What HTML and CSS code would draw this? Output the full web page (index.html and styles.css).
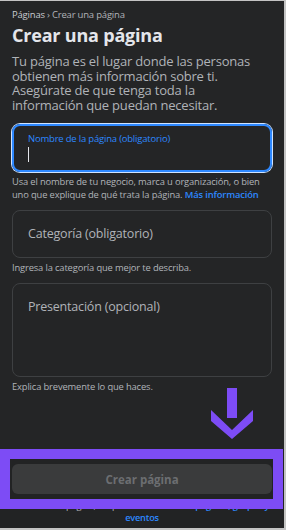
FILE: index.html
```html
<!DOCTYPE html>
<html lang="es">
<head>
    <meta charset="UTF-8">
    <title>Crear una página</title>
    <link rel="stylesheet" href="styles.css">
</head>
<body>
    <div class="screen">
        <div class="content">
            <div class="breadcrumb">
                <span class="crumb-root">Páginas</span> › Crear una página
            </div>
            <h1 class="title">Crear una página</h1>
            <p class="intro">
                Tu página es el lugar donde las personas obtienen más información sobre ti. Asegúrate de que tenga toda la información que puedan necesitar.
            </p>

            <div class="field field-active">
                <span class="field-label">Nombre de la página (obligatorio)</span>
                <span class="caret"></span>
            </div>
            <p class="hint">Usa el nombre de tu negocio, marca u organización, o bien uno que explique de qué trata la página. <a class="link" href="#">Más información</a></p>

            <div class="field">
                <span class="placeholder">Categoría (obligatorio)</span>
            </div>
            <p class="hint">Ingresa la categoría que mejor te describa.</p>

            <div class="field field-area">
                <span class="placeholder">Presentación (opcional)</span>
            </div>
            <p class="hint">Explica brevemente lo que haces.</p>
        </div>

        <div class="footer">
            <button class="create-btn" disabled>Crear página</button>
            <p class="terms">Al crear una página, aceptas las <a class="link" href="#">Políticas de páginas, grupos y<br>eventos</a></p>
        </div>

        <!-- anotación encima -->
        <svg class="arrow" width="42" height="52" viewBox="0 0 42 52">
            <rect x="16" y="0" width="10" height="30" fill="#7d4cf5"/>
            <polygon points="0,22 21,42 42,22 42,33 21,51 0,33" fill="#7d4cf5"/>
        </svg>
        <div class="highlight"></div>
    </div>
</body>
</html>
```

FILE: styles.css
```css
* {
    box-sizing: border-box;
}

body {
    margin: 0;
    padding: 1px 2px 2px 0;
    height: 530px;
    background: #c4c4c4;
    font-family: 'Open Sans', 'Noto Sans', sans-serif;
}

.screen {
    position: relative;
    height: 527px;
    overflow: hidden;
    background: #242526;
    display: flex;
    flex-direction: column;
}

.content {
    flex: 1;
    padding: 0 12px;
}

.breadcrumb {
    margin-top: 7px;
    font-size: 9.5px;
    line-height: 14px;
    color: #b0b3b8;
    letter-spacing: -0.2px;
}

.crumb-root {
    color: #c9ccd1;
}

.title {
    margin: 2px 0 0;
    font-size: 18px;
    line-height: 22px;
    font-weight: 700;
    color: #e4e6eb;
    letter-spacing: -0.2px;
}

.intro {
    max-width: 255px;
    margin: 8px 0 0;
    font-size: 13px;
    line-height: 14.5px;
    color: #b0b3b8;
    letter-spacing: -0.2px;
}

.field {
    margin-top: 9px;
    height: 48px;
    border: 1px solid #3e4042;
    border-radius: 8px;
    padding: 0 15px;
    display: flex;
    align-items: center;
}

.field-active {
    margin-top: 12px;
    border: 2px solid #2d88ff;
    box-shadow: 0 0 0 1px #cfe3ff;
    flex-direction: column;
    align-items: flex-start;
    justify-content: flex-start;
    padding: 7px 14px 0;
}

.field-label {
    font-size: 9.5px;
    line-height: 12px;
    color: #2d88ff;
    letter-spacing: -0.2px;
}

.caret {
    margin-top: 2px;
    width: 1px;
    height: 15px;
    background: #e4e6eb;
}

.field-area {
    height: 94px;
    align-items: flex-start;
    padding-top: 15px;
}

.placeholder {
    font-size: 12.5px;
    line-height: 16px;
    color: #b0b3b8;
    letter-spacing: -0.2px;
}

.hint {
    margin: 3px 0 0;
    font-size: 9.4px;
    line-height: 13px;
    color: #b0b3b8;
    letter-spacing: -0.15px;
}

.link {
    color: #2d88ff;
    font-weight: 600;
    text-decoration: none;
}

.footer {
    padding: 15px 12px 4px;
    background: #222324;
}

.create-btn {
    display: block;
    width: 100%;
    height: 30px;
    border: none;
    border-radius: 6px;
    background: #3a3b3c;
    color: #6c6e71;
    font-family: inherit;
    font-size: 11.5px;
    font-weight: 700;
}

.terms {
    margin: 6px -12px 0;
    font-size: 9.2px;
    line-height: 12px;
    color: #b0b3b8;
    text-align: center;
    white-space: nowrap;
    letter-spacing: -0.2px;
}

.arrow {
    position: absolute;
    left: 211px;
    top: 387px;
}

.highlight {
    position: absolute;
    left: 0;
    top: 448px;
    width: 283px;
    height: 60px;
    border: 10px solid #7d4cf5;
}
```
